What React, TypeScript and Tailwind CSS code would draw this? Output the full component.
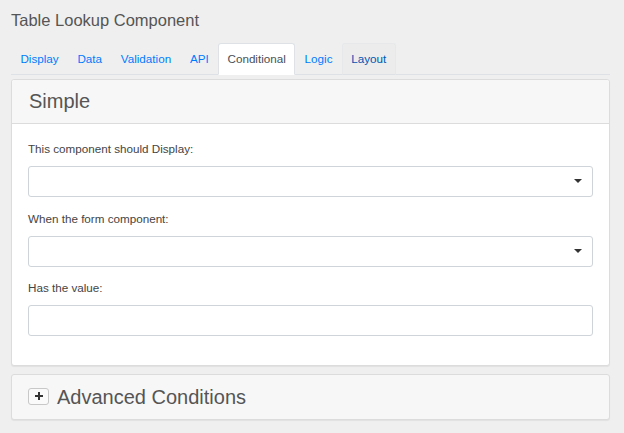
export default function App() {
  const tabs = ["Display", "Data", "Validation", "API", "Conditional", "Logic", "Layout"];
  return (
    <div className="min-h-[433px] w-[624px] bg-[#efefef] pl-[11px] pr-[14px] pt-[8px] font-['Liberation_Sans',Arial,sans-serif]">
      <h1 className="text-[16.5px] leading-[24px] text-[#555] font-normal">Table Lookup Component</h1>
      <div className="mt-[11px] flex border-b border-[#dee2e6]">
        {tabs.map((t) => {
          if (t === "Conditional") {
            return (
              <div key={t} className="-mb-px rounded-t-[3px] border border-[#dee2e6] border-b-white bg-white px-[8.4px] py-[6px] text-[11.67px] leading-[17.5px] text-[#495057]">
                {t}
              </div>
            );
          }
          if (t === "Layout") {
            return (
              <div key={t} className="-mb-px rounded-t-[3px] border border-[#e6e8ea] border-b-[#dee2e6] bg-[#ececec] px-[8.4px] py-[6px] text-[11.67px] leading-[17.5px] text-[#0056b3]">
                {t}
              </div>
            );
          }
          return (
            <div key={t} className="-mb-px border border-transparent px-[8.4px] py-[6px] text-[11.67px] leading-[17.5px] text-[#007bff]">
              {t}
            </div>
          );
        })}
      </div>

      <div className="mt-[4px] rounded-[3px] border border-[#dcdcdc] bg-white shadow-[0_1px_1px_rgba(0,0,0,0.06)]">
        <div className="flex h-[44px] items-center rounded-t-[3px] border-b border-[#dcdcdc] bg-[#f7f7f7] px-[17px]">
          <h4 className="text-[20px] leading-[24px] text-[#555] font-normal">Simple</h4>
        </div>
        <div className="px-[16px] pt-[15px] pb-[29px]">
          <div className="mb-[7px] text-[11.67px] leading-[20px] text-[#444]">This component should Display:</div>
          <div className="flex h-[31px] items-center justify-end rounded-[3px] border border-[#ced4da] bg-white pr-[10px]">
            <svg width="8" height="4" viewBox="0 0 8 4"><path d="M0 0 L8 0 L4 4 Z" fill="#333" /></svg>
          </div>
          <div className="mt-[12px] mb-[7px] text-[11.67px] leading-[20px] text-[#444]">When the form component:</div>
          <div className="flex h-[31px] items-center justify-end rounded-[3px] border border-[#ced4da] bg-white pr-[10px]">
            <svg width="8" height="4" viewBox="0 0 8 4"><path d="M0 0 L8 0 L4 4 Z" fill="#333" /></svg>
          </div>
          <div className="mt-[11px] mb-[7px] text-[11.67px] leading-[20px] text-[#444]">Has the value:</div>
          <div className="h-[31px] rounded-[3px] border border-[#ced4da] bg-white"></div>
        </div>
      </div>

      <div className="mt-[8px] flex h-[46px] items-center rounded-[3px] border border-[#dcdcdc] bg-[#f7f7f7] px-[16px] shadow-[0_1px_1px_rgba(0,0,0,0.06)]">
        <div className="-mt-px flex h-[17px] w-[21px] items-center justify-center rounded-[3px] border border-[#c8c8c8] bg-[#fafafa]">
          <svg width="8" height="8" viewBox="0 0 8 8"><path d="M3 0 H5 V3 H8 V5 H5 V8 H3 V5 H0 V3 H3 Z" fill="#333" /></svg>
        </div>
        <span className="ml-[8px] text-[20px] leading-[24px] text-[#555]">Advanced Conditions</span>
      </div>
    </div>
  );
}
